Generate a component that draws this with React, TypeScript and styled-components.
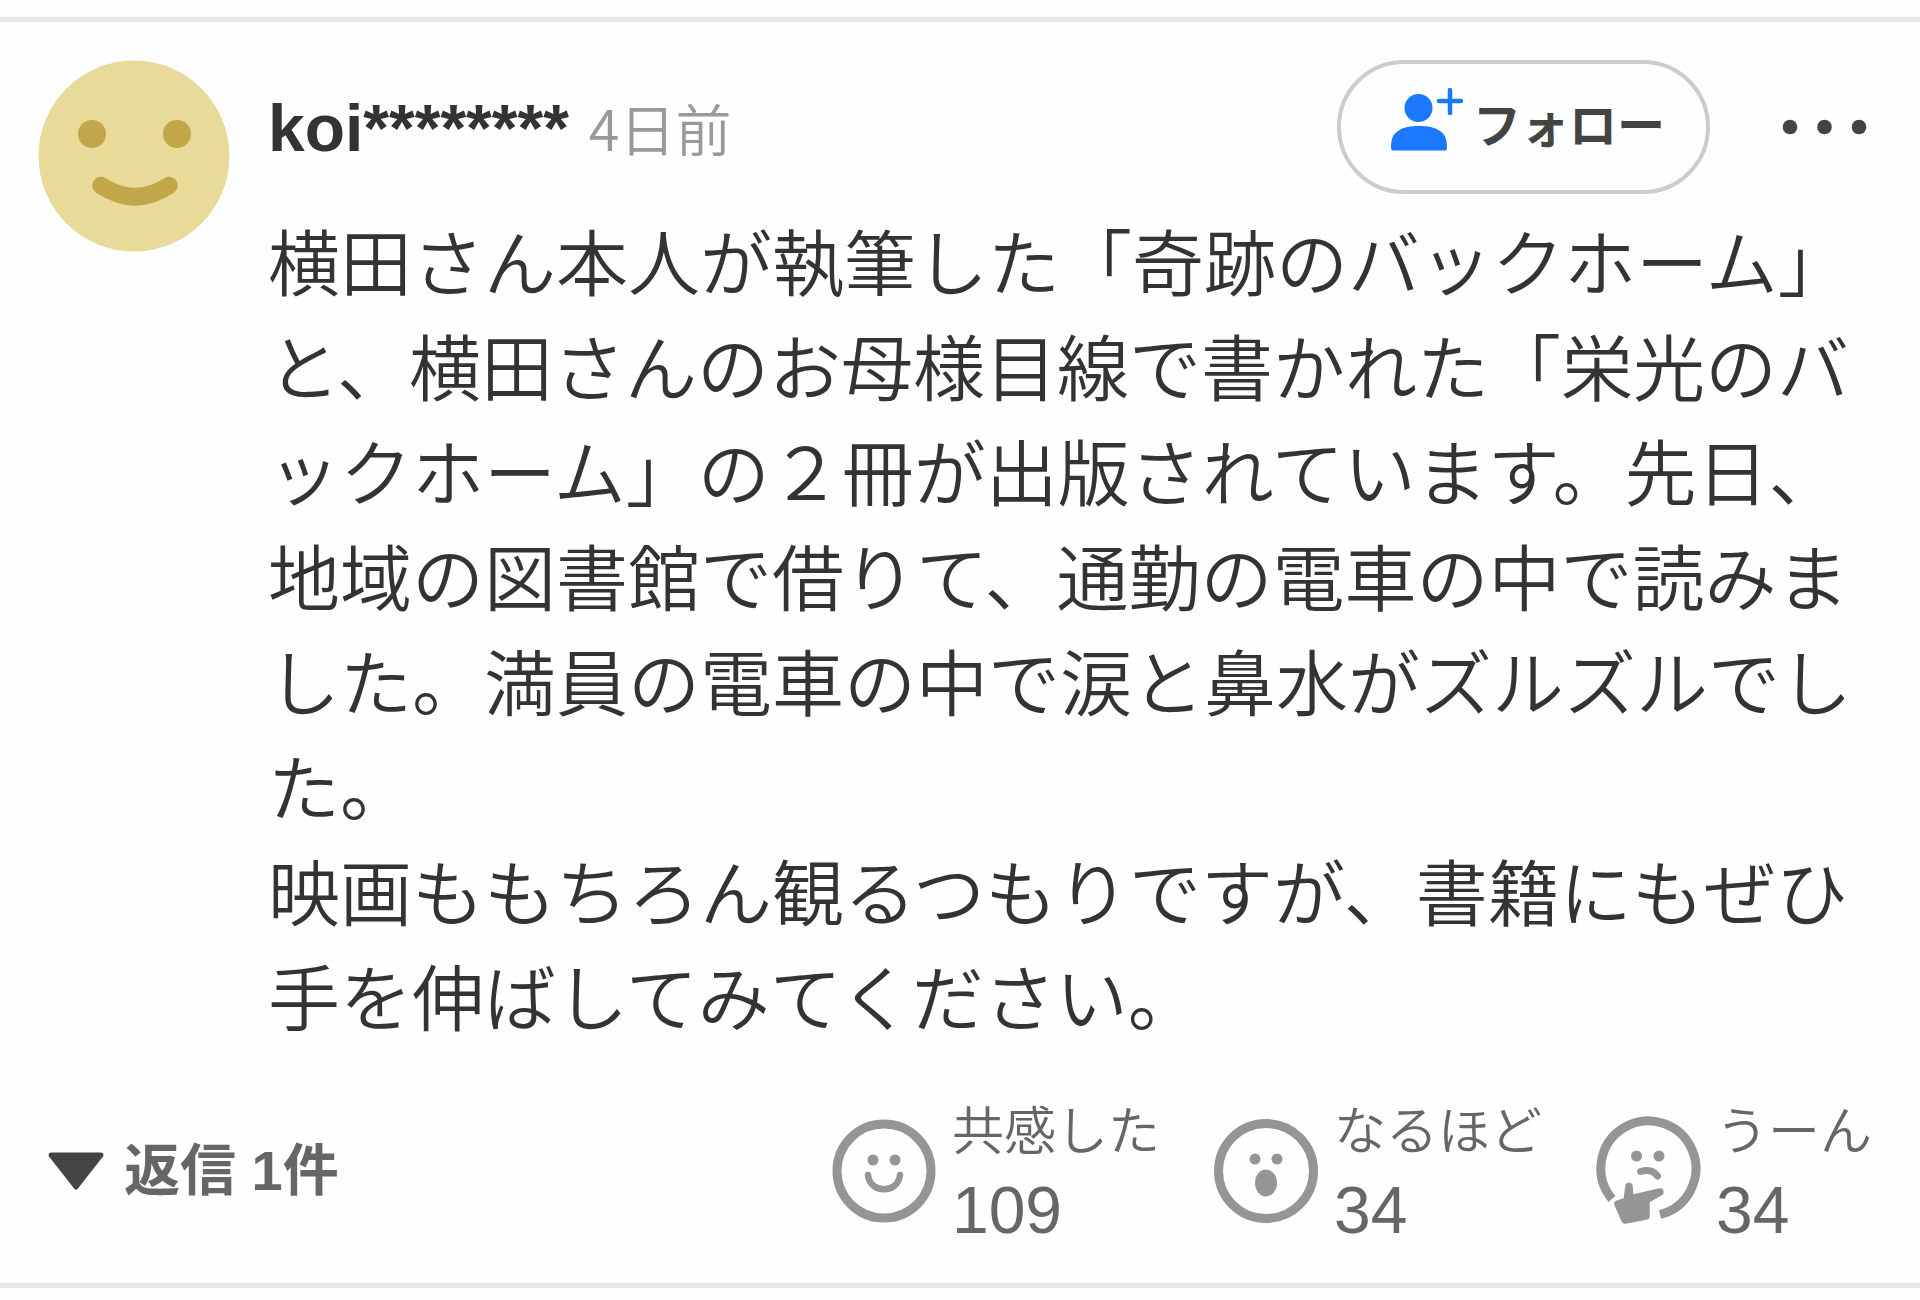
import React from "react";
import styled, { createGlobalStyle } from "styled-components";

const GlobalStyle = createGlobalStyle`
  * { box-sizing: border-box; }
  body {
    margin: 0;
    background: #fefefe;
    color: #333;
    font-family: "Liberation Sans", "Noto Sans CJK JP", sans-serif;
  }
  button {
    margin: 0;
    padding: 0;
    border: 0;
    background: none;
    color: inherit;
    font: inherit;
    cursor: pointer;
  }
  svg { display: block; flex: none; overflow: visible; }
`;

const Page = styled.main`
  padding-top: 17px;
`;

const Comment = styled.article`
  border-top: 5px solid #e3e9ea;
  border-bottom: 5px solid #e3e8eb;
  padding: 38px 48px 34px 38px;
`;

const Top = styled.div`
  display: flex;
  align-items: flex-start;
  gap: 38px;
`;

const Main = styled.div`
  flex: 1;
  min-width: 0;
`;

const Header = styled.header`
  display: flex;
  align-items: center;
  height: 134px;
`;

const Author = styled.div`
  display: flex;
  align-items: baseline;
  flex: 1;
  gap: 20px;
  line-height: 80px;
`;

const Name = styled.a`
  color: #333;
  font-size: 66px;
  font-weight: 700;
  text-decoration: none;
`;

const Time = styled.time`
  color: #999;
  font-family: "Noto Sans CJK JP", sans-serif;
  font-size: 56px;
  font-weight: 350;
`;

const FollowButton = styled.button`
  display: flex;
  align-items: center;
  gap: 8px;
  width: 373px;
  height: 134px;
  padding-left: 50px;
  border: 4px solid #ccc;
  border-radius: 67px;
  color: #444;
  font-size: 48px;
  font-weight: 700;
  line-height: 60px;
`;

const MenuButton = styled.button`
  margin-left: 68px;
`;

const Body = styled.p`
  margin: 19px 0 0;
  font-size: 72px;
  font-weight: 350;
  line-height: 105px;
  line-break: loose;
`;

const Footer = styled.footer`
  display: flex;
  align-items: center;
  justify-content: space-between;
  margin-top: 40px;
`;

const ReplyButton = styled.button`
  display: flex;
  align-items: center;
  gap: 20px;
  padding-left: 10px;
  color: #666;
  font-size: 56px;
  font-weight: 700;
  line-height: 80px;
`;

const Reactions = styled.div`
  display: flex;
  gap: 54px;
`;

const Reaction = styled.button`
  display: flex;
  align-items: center;
  gap: 16px;
  color: #666;
  text-align: left;
`;

const ReactionText = styled.span`
  display: flex;
  flex-direction: column;
`;

const ReactionLabel = styled.span`
  font-size: 52px;
  font-weight: 350;
  line-height: 78px;
`;

const ReactionCount = styled.span`
  font-size: 66px;
  line-height: 78px;
`;

const Avatar = () => (
  <svg width="192" height="192" viewBox="0 0 192 192" role="img" aria-label="koi">
    <circle cx="96" cy="96" r="95.5" fill="#e8da98" />
    <circle cx="54" cy="74" r="14" fill="#c1a74a" />
    <circle cx="139" cy="74" r="14" fill="#c1a74a" />
    <path d="M63 125.500Q97 148 131 125.500" fill="none" stroke="#c1a74a" strokeWidth="17.500" strokeLinecap="round" />
  </svg>
);

const FollowIcon = () => (
  <svg width="74" height="82" viewBox="0 0 74 82" aria-hidden="true">
    <g fill="#1b78ff">
      <circle cx="27.5" cy="22" r="14" />
      <path d="M2 64.500Q0 64.500 0 62C0 53 2 48 7 45C12 41 20 40 28 40C36 40 44 41 49 45C54 48 56 53 56 62Q56 64.500 54 64.500Z" />
    </g>
    <path d="M59 4V27M48 15H70" stroke="#1b78ff" strokeWidth="4.500" strokeLinecap="round" />
  </svg>
);

const DotsIcon = () => (
  <svg width="94" height="60" viewBox="0 0 94 60" fill="#444" aria-hidden="true">
    <circle cx="12" cy="30" r="7.3" />
    <circle cx="46.500" cy="30" r="7.3" />
    <circle cx="81" cy="30" r="7.3" />
  </svg>
);

const TriangleIcon = () => (
  <svg width="56" height="38" viewBox="0 0 56 38" aria-hidden="true">
    <path d="M3 3H53L28 35Z" fill="#444" stroke="#444" strokeWidth="5" strokeLinejoin="round" />
  </svg>
);

type Mood = "smile" | "wow" | "think";

const FaceIcon = ({ mood }: { mood: Mood }) => (
  <svg width="104" height="104" viewBox="0 0 104 104" fill="none" stroke="#959595" aria-hidden="true">
    {mood === "smile" && (
      <>
        <circle cx="52" cy="52" r="47" strokeWidth="9" />
        <circle cx="41" cy="41" r="5.5" fill="#959595" stroke="none" />
        <circle cx="63" cy="41" r="5.5" fill="#959595" stroke="none" />
        <path d="M36 56C38 75 66 75 68 56" strokeWidth="6.5" strokeLinecap="round" />
      </>
    )}
    {mood === "wow" && (
      <>
        <circle cx="52" cy="52" r="47.5" strokeWidth="9" />
        <circle cx="41" cy="40" r="5.5" fill="#959595" stroke="none" />
        <circle cx="63" cy="40" r="5.5" fill="#959595" stroke="none" />
        <ellipse cx="52" cy="64" rx="11" ry="13.5" fill="#959595" stroke="none" />
      </>
    )}
    {mood === "think" && (
      <>
        <path d="M16 80A47.500 47.500 0 1 1 64 95.500" strokeWidth="9" />
        <circle cx="40.5" cy="37" r="5.5" fill="#959595" stroke="none" />
        <circle cx="63" cy="37" r="5.5" fill="#959595" stroke="none" />
        <path d="M44.500 52.500Q56 49 61.500 57" strokeWidth="7" strokeLinecap="round" />
        <path
          d="M22 85L31 82L33 67.500L34 80L64 73L50 81V97L29 101Z"
          fill="#959595"
          strokeWidth="7.500"
          strokeLinejoin="round"
        />
      </>
    )}
  </svg>
);

const reactions: { mood: Mood; label: string; count: number }[] = [
  { mood: "smile", label: "共感した", count: 109 },
  { mood: "wow", label: "なるほど", count: 34 },
  { mood: "think", label: "うーん", count: 34 },
];

export default function App() {
  return (
    <Page lang="ja">
      <GlobalStyle />
      <Comment>
        <Top>
          <Avatar />
          <Main>
            <Header>
              <Author>
                <Name href="#user">koi********</Name>
                <Time>4日前</Time>
              </Author>
              <FollowButton type="button">
                <FollowIcon />
                フォロー
              </FollowButton>
              <MenuButton type="button" aria-label="メニュー">
                <DotsIcon />
              </MenuButton>
            </Header>
            <Body>
              横田さん本人が執筆した「奇跡のバックホーム」と、横田さんのお母様目線で書かれた「栄光のバックホーム」の２冊が出版されています。先日、地域の図書館で借りて、通勤の電車の中で読みました。満員の電車の中で涙と鼻水がズルズルでした。
              <br />
              映画ももちろん観るつもりですが、書籍にもぜひ手を伸ばしてみてください。
            </Body>
          </Main>
        </Top>
        <Footer>
          <ReplyButton type="button">
            <TriangleIcon />
            返信 1件
          </ReplyButton>
          <Reactions>
            {reactions.map((r) => (
              <Reaction type="button" key={r.mood}>
                <FaceIcon mood={r.mood} />
                <ReactionText>
                  <ReactionLabel>{r.label}</ReactionLabel>
                  <ReactionCount>{r.count}</ReactionCount>
                </ReactionText>
              </Reaction>
            ))}
          </Reactions>
        </Footer>
      </Comment>
    </Page>
  );
}
